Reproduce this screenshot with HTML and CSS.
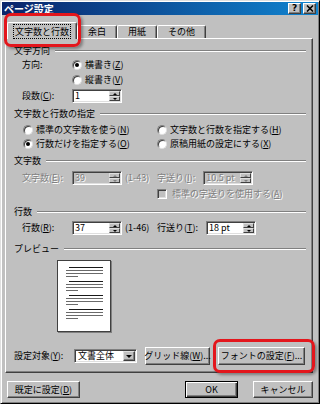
FILE: index.html
```html
<!DOCTYPE html>
<html lang="ja">
<head>
    <meta charset="UTF-8">
    <title>ページ設定</title>
    <link rel="stylesheet" href="styles.css">
</head>
<body>

<div class="dialog">
    <div class="titlebar">
        <span class="title">ページ設定</span>
        <span class="tbtn">?</span>
        <span class="tbtn"><svg width="8" height="7" viewBox="0 0 8 7"><path d="M1 0.5L7 6.5M7 0.5L1 6.5" stroke="#000" stroke-width="1.6"/></svg></span>
    </div>

    <div class="tabs">
        <div class="tab active"><span class="focus">文字数と行数</span></div>
        <div class="tab">余白</div>
        <div class="tab">用紙</div>
        <div class="tab">その他</div>
    </div>

    <div class="panel">
        <div class="gtitle">文字方向</div>
        <div class="row indent mt-1">
            <span class="lbl">方向:</span>
            <span class="opt"><span class="radio on"></span>横書き(<u>Z</u>)</span>
        </div>
        <div class="row indent mt-1">
            <span class="lbl"></span>
            <span class="opt"><span class="radio"></span>縦書き(<u>V</u>)</span>
        </div>
        <div class="row indent mt-2">
            <span class="lbl">段数(<u>C</u>):</span>
            <span class="spin"><span class="val">1</span><span class="arrows"><i class="up"></i><i class="dn"></i></span></span>
        </div>

        <div class="gtitle mt-5">文字数と行数の指定</div>
        <div class="row opts mt-3">
            <span class="opt col"><span class="radio"></span>標準の文字数を使う(<u>N</u>)</span>
            <span class="opt"><span class="radio"></span>文字数と行数を指定する(<u>H</u>)</span>
        </div>
        <div class="row opts">
            <span class="opt col"><span class="radio on"></span>行数だけを指定する(<u>O</u>)</span>
            <span class="opt"><span class="radio"></span>原稿用紙の設定にする(<u>X</u>)</span>
        </div>

        <div class="gtitle mt-4">文字数</div>
        <div class="row indent off mt-4">
            <span class="lcol">
                <span class="lbl">文字数(<u>E</u>):</span>
                <span class="spin"><span class="val">39</span><span class="arrows"><i class="up"></i><i class="dn"></i></span></span>
                <span class="range">(1-43)</span>
            </span>
            <span>字送り(<u>I</u>):</span>
            <span class="spin right"><span class="val">10.5 pt</span><span class="arrows"><i class="up"></i><i class="dn"></i></span></span>
        </div>
        <div class="row off checkrow mt-2">
            <span class="check"></span>標準の字送りを使用する(<u>A</u>)
        </div>

        <div class="gtitle mt-5">行数</div>
        <div class="row indent mt-3">
            <span class="lcol">
                <span class="lbl">行数(<u>R</u>):</span>
                <span class="spin"><span class="val">37</span><span class="arrows"><i class="up"></i><i class="dn"></i></span></span>
                <span class="range">(1-46)</span>
            </span>
            <span>行送り(<u>T</u>):</span>
            <span class="spin right"><span class="val">18 pt</span><span class="arrows"><i class="up"></i><i class="dn"></i></span></span>
        </div>

        <div class="gtitle mt-8">プレビュー</div>
        <div class="page">
            <div class="para"><i class="l1"></i><i></i><i></i><i class="l3"></i></div>
            <div class="para"><i class="l1"></i><i></i><i></i><i class="l3"></i></div>
            <div class="para"><i class="l1"></i><i></i><i></i><i class="l3"></i></div>
            <div class="para"><i class="l1"></i><i></i><i></i><i class="l3"></i></div>
        </div>

        <div class="row foot">
            <span class="flbl">設定対象(<u>Y</u>):</span>
            <span class="select"><span class="val">文書全体</span><span class="drop"></span></span>
            <span class="btn grid-btn">グリッド線(<u>W</u>)...</span>
            <span class="btn font-btn">フォントの設定(<u>F</u>)...</span>
        </div>
    </div>

    <div class="actions">
        <span class="btn def-btn">既定に設定(<u>D</u>)</span>
        <span class="btn ok-btn">OK</span>
        <span class="btn cancel-btn">キャンセル</span>
    </div>

    <!-- red highlight marks -->
    <div class="mark mark-tab"></div>
    <div class="mark mark-font"></div>
</div>

</body>
</html>
```

FILE: styles.css
```css
* {
    margin: 0;
    padding: 0;
    box-sizing: border-box;
}

body {
    background: #c0c0c0;
    font-family: "Noto Sans CJK JP", "Noto Sans", sans-serif;
    font-size: 9px;
    line-height: 12px;
    color: #000;
}

u {
    text-decoration: underline;
    text-underline-offset: 1px;
}

.dialog {
    position: relative;
    width: 320px;
    height: 404px;
    padding: 1px;
    background: #c0c0c0;
    border: 1px solid;
    border-color: #dfdfdf #000 #000 #dfdfdf;
    box-shadow: inset 1px 1px #fff, inset -1px -1px #808080;
}

/* title bar */
.titlebar {
    display: flex;
    align-items: center;
    height: 13px;
    padding: 0 2px;
    background: linear-gradient(to right, #0a246a, #1084d0);
}

.title {
    flex: 1;
    color: #fff;
    font-weight: bold;
    font-size: 10px;
}

.tbtn {
    display: flex;
    align-items: center;
    justify-content: center;
    width: 13px;
    height: 11px;
    margin-left: 2px;
    background: #c0c0c0;
    border: 1px solid;
    border-color: #fff #404040 #404040 #fff;
    box-shadow: inset -1px -1px #808080;
    font-family: "DejaVu Sans", sans-serif;
    font-weight: bold;
    font-size: 9px;
    line-height: 9px;
}

/* tabs */
.tabs {
    display: flex;
    align-items: flex-end;
    height: 16px;
    margin-top: 7px;
    padding-left: 5px;
}

.tab {
    height: 13px;
    padding: 0 10px;
    border: 1px solid;
    border-bottom: none;
    border-color: #fff #404040 #404040 #fff;
    border-radius: 2px 2px 0 0;
    box-shadow: inset -1px 0 #808080;
    line-height: 12px;
}

.tab.active {
    position: relative;
    z-index: 1;
    height: 17px;
    margin-bottom: -1px;
    padding: 3px 6px 0;
    background: #c0c0c0;
}

.focus {
    outline: 1px dotted #000;
    padding: 0 1px;
}

/* panel */
.panel {
    margin: 0 5px 0 3px;
    padding: 6px 6px 7px 8px;
    border: 1px solid;
    border-color: #fff #404040 #404040 #fff;
    box-shadow: inset -1px -1px #808080;
}

.gtitle {
    display: flex;
    align-items: center;
    height: 12px;
}

.gtitle::after {
    content: "";
    flex: 1;
    margin-left: 5px;
    border-top: 1px solid #808080;
    border-bottom: 1px solid #fff;
}

.row {
    display: flex;
    align-items: center;
    height: 14px;
    white-space: nowrap;
}

.indent {
    padding-left: 8px;
}

.opts {
    padding-left: 9px;
}

.checkrow {
    padding-left: 143px;
}

.mt-1 { margin-top: 1px; }
.mt-2 { margin-top: 2px; }
.mt-3 { margin-top: 3px; }
.mt-4 { margin-top: 4px; }
.mt-5 { margin-top: 5px; }
.mt-8 { margin-top: 8px; }

.lbl {
    flex: none;
    width: 50px;
}

.lcol {
    display: flex;
    align-items: center;
    flex: none;
    width: 135px;
}

.range {
    margin-left: 3px;
}

.opt {
    display: flex;
    align-items: center;
}

.col {
    width: 134px;
}

.radio {
    position: relative;
    flex: none;
    width: 10px;
    height: 10px;
    margin-right: 3px;
    background: #fff;
    border: 1px solid;
    border-color: #808080 #dfdfdf #dfdfdf #808080;
    border-radius: 50%;
    box-shadow: inset 1px 1px #404040;
}

.radio.on::after {
    content: "";
    position: absolute;
    left: 2px;
    top: 2px;
    width: 4px;
    height: 4px;
    border-radius: 50%;
    background: #000;
}

.check {
    flex: none;
    width: 10px;
    height: 10px;
    margin-right: 5px;
    background: #c0c0c0;
    border: 1px solid;
    border-color: #808080 #fff #fff #808080;
    box-shadow: inset 1px 1px #404040, inset -1px -1px #dfdfdf;
}

/* spin boxes */
.spin {
    display: flex;
    flex: none;
    width: 50px;
    height: 14px;
    padding: 1px;
    background: #fff;
    border: 1px solid;
    border-color: #808080 #fff #fff #808080;
    box-shadow: inset 1px 1px #404040, inset -1px -1px #dfdfdf;
}

.spin.right {
    margin-left: 8px;
}

.spin .val {
    flex: 1;
    padding-left: 1px;
    line-height: 10px;
    font-size: 9px;
}

.arrows {
    display: flex;
    flex-direction: column;
    width: 11px;
}

.arrows i {
    display: flex;
    align-items: center;
    justify-content: center;
    flex: 1;
    background: #c0c0c0;
    border: 1px solid;
    border-color: #dfdfdf #404040 #404040 #dfdfdf;
}

.arrows i::after {
    content: "";
    border-left: 2px solid transparent;
    border-right: 2px solid transparent;
}

.arrows .up::after {
    border-bottom: 2px solid #000;
}

.arrows .dn::after {
    border-top: 2px solid #000;
}

/* disabled controls */
.off {
    color: #808080;
    text-shadow: 1px 1px #fff;
}

.off .spin {
    background: #c0c0c0;
}

.off .arrows .up::after {
    border-bottom-color: #808080;
}

.off .arrows .dn::after {
    border-top-color: #808080;
}

/* preview */
.page {
    width: 54px;
    height: 72px;
    margin: 5px 0 0 43px;
    padding: 6px 0 0 8px;
    background: #fff;
    border: 1px solid #404040;
    box-shadow: 1px 1px #808080;
}

.para {
    margin-bottom: 4px;
}

.para i {
    display: block;
    width: 37px;
    height: 1px;
    margin-bottom: 2px;
    background: #6a6a6a;
}

.para .l1 {
    width: 34px;
    margin-left: 3px;
    background: #1a1a1a;
}

.para .l3 {
    width: 12px;
}

/* footer */
.foot {
    height: 18px;
    margin-top: 15px;
}

.flbl {
    width: 60px;
    flex: none;
}

.select {
    display: flex;
    width: 63px;
    height: 14px;
    padding: 1px;
    background: #fff;
    border: 1px solid;
    border-color: #808080 #fff #fff #808080;
    box-shadow: inset 1px 1px #404040, inset -1px -1px #dfdfdf;
}

.select .val {
    flex: 1;
    padding-left: 2px;
    line-height: 10px;
}

.drop {
    display: flex;
    align-items: center;
    justify-content: center;
    width: 12px;
    background: #c0c0c0;
    border: 1px solid;
    border-color: #dfdfdf #404040 #404040 #dfdfdf;
    box-shadow: inset -1px -1px #808080;
}

.drop::after {
    content: "";
    border-left: 3px solid transparent;
    border-right: 3px solid transparent;
    border-top: 3px solid #000;
}

.btn {
    display: flex;
    align-items: center;
    justify-content: center;
    flex: none;
    height: 18px;
    background: #c0c0c0;
    border: 1px solid;
    border-color: #fff #404040 #404040 #fff;
    box-shadow: inset -1px -1px #808080;
    white-space: nowrap;
}

.grid-btn {
    width: 65px;
    margin-left: 8px;
}

.font-btn {
    width: 87px;
    margin-left: 8px;
}

.actions {
    display: flex;
    margin-top: 8px;
    padding: 0 5px;
}

.actions .btn {
    height: 17px;
}

.def-btn {
    width: 73px;
}

.ok-btn {
    width: 53px;
    margin-left: auto;
    border-color: #000;
    box-shadow: inset 1px 1px #fff, inset -1px -1px #404040, inset -2px -2px #808080;
}

.cancel-btn {
    width: 60px;
    margin-left: 15px;
}

/* red highlight marks */
.mark {
    position: absolute;
    border: 3px solid #e3161c;
    border-radius: 7px;
    box-shadow: 2px 2px 3px rgba(0, 0, 0, 0.35);
}

.mark-tab {
    left: 3px;
    top: 12px;
    width: 77px;
    height: 34px;
}

.mark-font {
    left: 212px;
    top: 338px;
    width: 102px;
    height: 34px;
}
```
